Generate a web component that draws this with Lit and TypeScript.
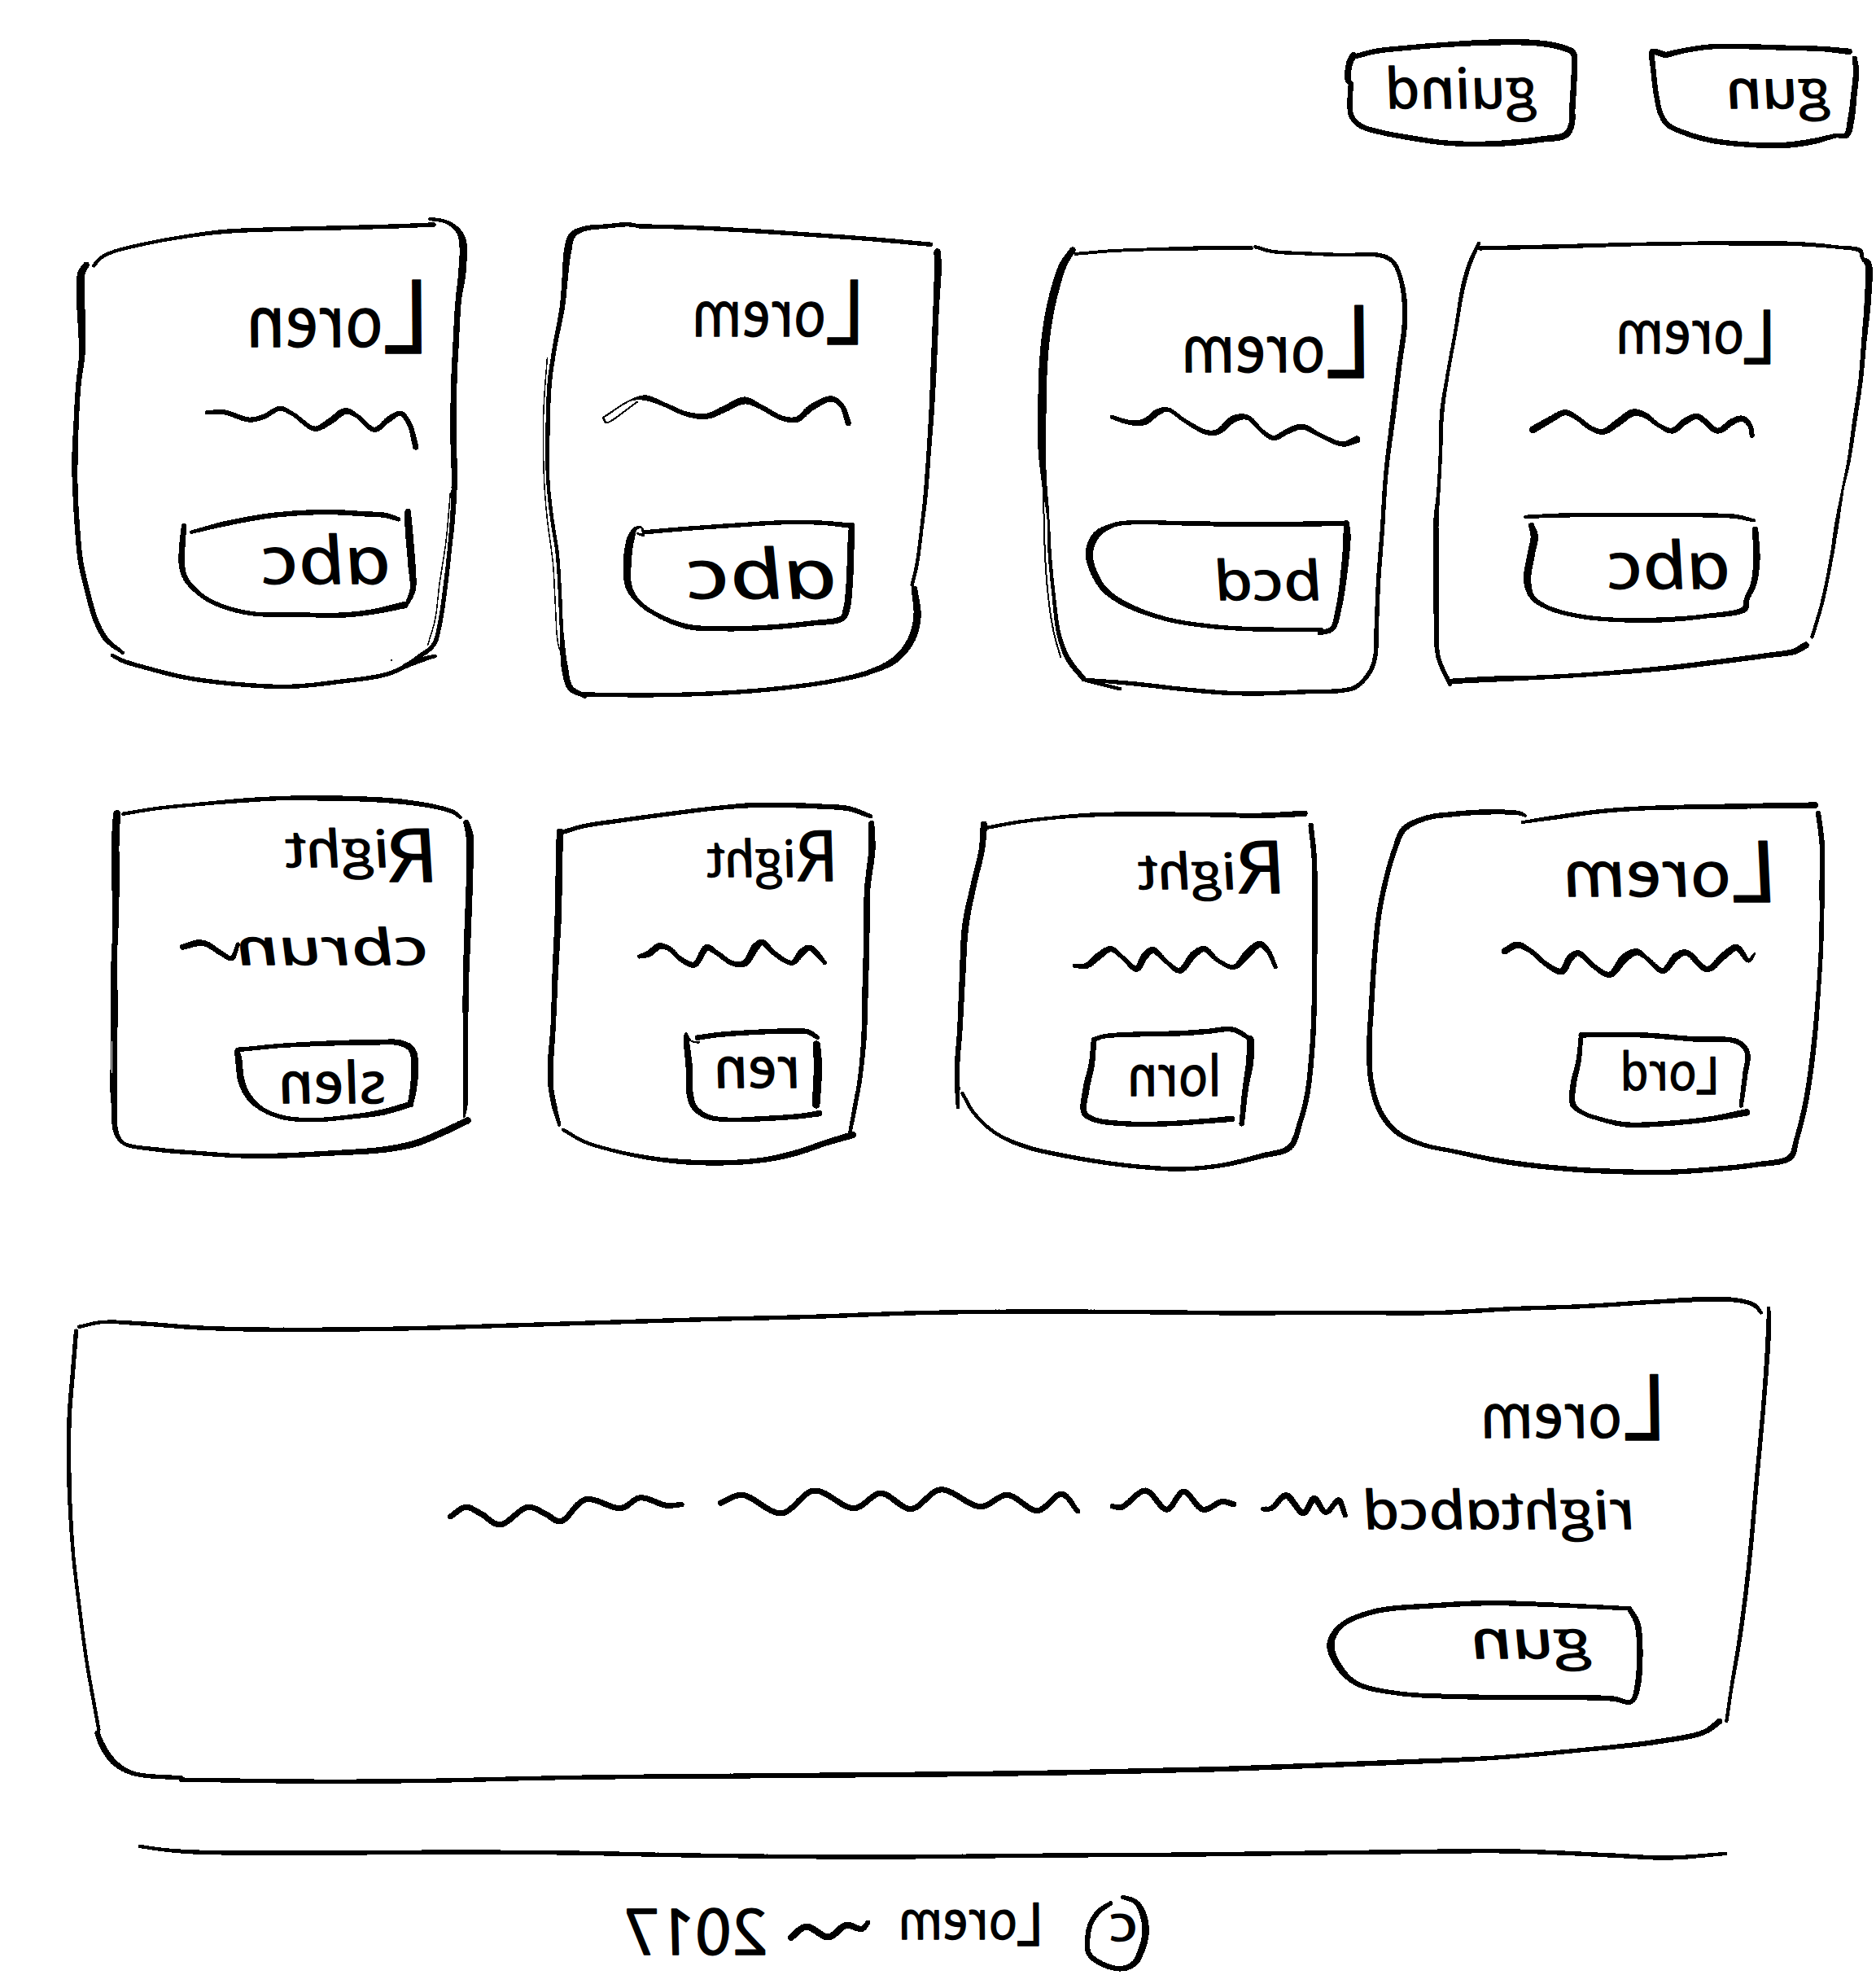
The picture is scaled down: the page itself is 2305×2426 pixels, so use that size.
import { LitElement, html, svg, css, nothing } from "lit";
import { customElement, property } from "lit/decorators.js";

/** A local drawing grid: page origin plus grid units per page pixel. */
interface Grid { ox: number; oy: number; sx: number; sy: number }
interface Rect { x: number; y: number; w: number; h: number }

/** Mirrored pen lettering. Vertical values are grid units. */
interface Label {
  text: string;
  left: number;
  right: number;
  base: number;
  top: number;
  /** top and baseline of a taller initial */
  initial?: [number, number];
  /** height of the measured glyphs in em */
  ratio?: number;
}
interface Part {
  kind: "title" | "line" | "button" | "mark";
  grid: Grid;
  box: [number, number, number, number];
  strokes?: string[];
  label?: Label;
}
interface Card { grid: Grid; box: [number, number, number, number]; outline: string[]; parts: Part[] }

const grid = (ox: number, oy: number, w: number, h: number): Grid => ({
  ox, oy, sx: Math.min(3, 1568 / w), sy: Math.min(3, 1568 / h),
});

const toRect = (g: Grid, b: [number, number, number, number]): Rect => ({
  x: g.ox + b[0] / g.sx,
  y: g.oy + b[1] / g.sy,
  w: (b[2] - b[0]) / g.sx,
  h: (b[3] - b[1]) / g.sy,
});

/**
 * Turns "x,y:w x,y x,y:w" into the filled area of a pen stroke whose
 * width runs smoothly between the given widths.
 */
function ink(g: Grid, source: string, extra: number): string {
  let w = 6;
  const p = source.trim().split(/\s+/).map((token) => {
    const [xy, width] = token.split(":");
    const [x, y] = xy.split(",").map(Number);
    if (width) w = Number(width);
    return [g.ox + x / g.sx, g.oy + y / g.sy, w > 3 ? w + extra : w];
  });
  const samples: number[][] = [];
  if (p.length === 1) samples.push(p[0]);
  for (let i = 0; i < p.length - 1; i++) {
    const a = p[Math.max(0, i - 1)], b = p[i], c = p[i + 1], d = p[Math.min(p.length - 1, i + 2)];
    const len = Math.hypot(c[0] - b[0], c[1] - b[1]);
    const n = Math.max(2, Math.ceil(len / 4));
    const dist = (u: number[], v: number[]) => Math.max(0.01, Math.sqrt(Math.hypot(u[0] - v[0], u[1] - v[1])));
    const t1 = dist(a, b), t2 = dist(b, c), t3 = dist(c, d);
    const tangent = (k: number, first: boolean) => {
      if (first) {
        if (a === b) return c[k] - b[k];
        return t2 * ((b[k] - a[k]) / t1 - (c[k] - a[k]) / (t1 + t2) + (c[k] - b[k]) / t2);
      }
      if (c === d) return c[k] - b[k];
      return t2 * ((c[k] - b[k]) / t2 - (d[k] - b[k]) / (t2 + t3) + (d[k] - c[k]) / t3);
    };
    const m1 = [tangent(0, true), tangent(1, true)], m2 = [tangent(0, false), tangent(1, false)];
    for (let s = i === 0 ? 0 : 1; s <= n; s++) {
      const t = s / n, tt = t * t, ttt = tt * t;
      const at = (k: number) =>
        (2 * ttt - 3 * tt + 1) * b[k] + (ttt - 2 * tt + t) * m1[k] + (3 * tt - 2 * ttt) * c[k] + (ttt - tt) * m2[k];
      samples.push([at(0), at(1), b[2] + (c[2] - b[2]) * t]);
    }
  }
  const f = (v: number) => v.toFixed(1);
  let d = "";
  samples.forEach((s, i) => {
    const r = s[2] / 2;
    d += `M${f(s[0] - r)} ${f(s[1])}a${r} ${r} 0 1 0 ${2 * r} 0a${r} ${r} 0 1 0 ${-2 * r} 0z`;
    const q = samples[i + 1];
    if (!q) return;
    const len = Math.hypot(q[0] - s[0], q[1] - s[1]) || 1;
    const nx = -(q[1] - s[1]) / len, ny = (q[0] - s[0]) / len, k = q[2] / 2;
    d += `M${f(s[0] + nx * r)} ${f(s[1] + ny * r)}L${f(q[0] + nx * k)} ${f(q[1] + ny * k)}L${f(q[0] - nx * k)} ${f(q[1] - ny * k)}L${f(s[0] - nx * r)} ${f(s[1] - ny * r)}z`;
  });
  return d;
}

const SLANT = 11;

function lettering(g: Grid, l: Label) {
  const ratio = l.ratio ?? 0.545;
  const size = (l.base - l.top) / g.sy / ratio;
  const start = g.ox + l.right / g.sx;
  const base = g.oy + l.base / g.sy;
  const width = (l.right - l.left) / g.sx;
  let body: unknown = l.text;
  if (l.initial) {
    const big = (l.initial[1] - l.initial[0]) / g.sy / 0.714;
    const drop = (l.initial[1] - l.base) / g.sy;
    body = svg`<tspan font-size=${big} dy=${drop}>${l.text[0]}</tspan><tspan dy=${-drop}>${l.text.slice(1)}</tspan>`;
  }
  return svg`<text class="hand" font-size=${size} textLength=${width} lengthAdjust="spacingAndGlyphs"
    transform="translate(${start} ${base}) scale(-1 1) skewX(${SLANT})">${body}</text>`;
}

function drawing(r: Rect, g: Grid, strokes: string[] = [], label?: Label, extra = 0.4) {
  return html`<svg width=${r.w} height=${r.h} viewBox="${r.x} ${r.y} ${r.w} ${r.h}">
    ${strokes.map((s) => svg`<path class="ink" d=${ink(g, s, extra)}></path>`)}
    ${label ? lettering(g, label) : nothing}
  </svg>`;
}

/* ---------- content ---------- */

const G1 = grid(1600, 20, 705, 180);
const G2 = grid(60, 250, 560, 620);
const G3 = grid(640, 250, 560, 620);
const G4 = grid(1250, 280, 500, 590);
const G5 = grid(1740, 280, 565, 590);
const G6 = grid(110, 960, 500, 480);
const G7 = grid(650, 960, 460, 490);
const G8 = grid(1150, 970, 500, 480);
const G9 = grid(1660, 970, 600, 480);
const G10 = grid(1500, 1580, 700, 620);
const G11 = grid(60, 1580, 1460, 640);
const G12 = grid(700, 2240, 760, 186);
const PAGE: Grid = { ox: 0, oy: 0, sx: 1, sy: 1 };

const title = (g: Grid, text: string, left: number, right: number, top: number, base: number, initial: [number, number]): Part => ({
  kind: "title", grid: g, box: [left, initial[0], right, initial[1]],
  label: { text, left, right, top, base, initial },
});
const wave = (g: Grid, box: [number, number, number, number], ...strokes: string[]): Part => ({ kind: "line", grid: g, box, strokes });
const button = (g: Grid, box: [number, number, number, number], label: Label, ...strokes: string[]): Part => ({
  kind: "button", grid: g, box, strokes, label,
});

const NAV: Part[] = [
  button(G1, [120, 88, 752, 480], { text: "guind", left: 218, right: 634, top: 228, base: 340 },
    "150,147:6 200,130 280,118 400,105 520,97:7 610,97 670,104 715,118 740,135:7 744,160 742,250 738,340 736,400 720,438:8 650,455:7 560,468 470,472:6 380,466 300,450 220,430 160,405 135,370 130,330 133,250",
    "140,145:8 130,170 125,235:7 133,250:5"),
  button(G1, [950, 102, 1520, 485], { text: "gun", left: 1150, right: 1436, top: 232, base: 340 },
    "992,143:7 1050,125:6 1120,112 1220,112 1320,116 1420,120 1495,130:7",
    "1510,155:6 1514,200:7 1508,290 1500,380:8 1488,438:7 1460,440:5 1400,460:7 1320,475:7 1220,473:6 1120,458 1050,432 1000,400 980,360 968,290 960,200 958,130:7 975,135 995,143"),
];

const TOP_ROW: Card[] = [
  {
    grid: G2, box: [82, 45, 1436, 1505],
    outline: [
      "130,190:7 113,215:9 110,290:10 115,400:9 115,470:7 103,560:6 95,680 90,800:7 92,900:6 100,1020:6 110,1110 135,1210 165,1300 200,1355 255,1395:4",
      "155,193:4 180,168 220,150 330,125 450,105 600,87:5 770,80 1000,75 1200,70 1325,65:5",
      "1312,47:4 1370,57 1410,85:6 1425,120:9 1422,220:9 1410,300:7 1402,420:7 1395,550:7 1392,700:7 1396,850:7 1392,950:6 1380,1070:5 1365,1190:5 1345,1310:5 1325,1370:5 1270,1410:5 1210,1445 1150,1465 1000,1485 830,1500 640,1492 470,1472 340,1443 255,1420 218,1403:4",
      "1382,900:1.5 1367,1050 1345,1180 1330,1290 1305,1370",
      "1230,1435:6 1280,1418 1330,1405:4", "1180,1418:2.5",
    ],
    parts: [
      title(G2, "Loren", 666, 1298, 325, 445, [237, 465]),
      wave(G2, [540, 630, 1272, 760], "543,650:4 600,648:5 690,672:5 740,662:5 795,637:5 840,655:4 915,700:5 970,675:7 1020,645:7 1060,660:4 1120,703:5 1170,670:6 1210,652:5 1240,685:5 1262,757:6"),
      button(G2, [445, 952, 1262, 1286], { text: "abc", left: 720, right: 1165, top: 1070, base: 1182 },
        "490,1022:4 600,997:6 750,972 870,962 980,960 1080,965 1160,970 1203,982:5",
        "465,1003:6 460,1050:7 457,1120:7 470,1165:6 520,1215:5 590,1250 700,1275 850,1278 1000,1280:6 1110,1270 1225,1248:8",
        "1235,958:7 1238,1010:9 1248,1120:9 1252,1200:7 1235,1240:5"),
    ],
  },
  {
    grid: G3, box: [75, 58, 1446, 1536],
    outline: [
      "415,72:4 370,65:5 300,70:5 210,80:6 175,100:8 160,150:9 152,220:7 142,320:6 115,450:5 98,560:5 92,700 92,850:4 105,970:4 125,1090 133,1200:4 140,1330:4 150,1440:8 170,1505:7 220,1530:5",
      "90,480:1.5 80,600 76,700 80,870 90,980 110,1120 118,1250 128,1370 145,1410",
      "400,70:5 600,75 800,85 1000,97 1200,110 1410,127:5",
      "1432,150:8 1434,200:9 1428,320:7 1420,500:7 1412,650:6 1402,780:5 1392,900 1378,1010:4 1362,1120 1345,1185:4",
      "1353,1197:7 1363,1280:9 1345,1350:9 1290,1415:8 1200,1455:6 1080,1482:5 900,1505 700,1520 450,1527 215,1525:5",
    ],
    parts: [
      title(G3, "Lorem", 576, 1174, 305, 412, [237, 437]),
      wave(G3, [275, 598, 1134, 688], "285,665:2 380,612 430,605:6 500,628:4 570,655:5 640,662:6 700,640:7 770,613:8 820,630:5 900,668:5 950,672:6 1000,635:7 1070,608:6 1105,630:5 1127,683:6", "285,668:3 293,682:2 400,618"),
      button(G3, [355, 985, 1148, 1330], { text: "abc", left: 558, right: 1076, top: 1112, base: 1228 },
        "430,1022:5 560,1012 750,1000 900,992 1030,993 1138,1002:6",
        "1138,1002:7 1135,1060:8 1130,1180:8 1120,1260:8 1105,1290:7 1000,1305:6 850,1318 700,1322 570,1315 460,1275:5 400,1235 370,1190:8 366,1110:10 378,1040:9 395,1010:4 415,1008:2.5 420,1030:4 400,1026:2"),
    ],
  },
  {
    grid: G4, box: [76, 56, 1438, 1525],
    outline: [
      "205,72:7 170,120:9 140,200:10 115,300:10 98,430:10 92,600:10 92,730:9 100,830:6 115,950:3 120,1060:4 135,1200:4 155,1330:5 190,1410:6 245,1472:6",
      "98,850:2 100,1000 112,1180 135,1320 160,1400", "245,1475:4 310,1490 380,1505",
      "215,85:3.5 350,75 500,70 700,66:5 862,66:5",
      "878,62:4 940,77 1050,83 1200,88 1340,90:5 1385,110 1412,160 1428,240:6 1428,320:6 1410,440:6 1385,620:6 1360,800:5 1345,1000 1332,1150 1325,1300 1320,1400:5 1300,1450:5 1250,1498:5 1200,1510 1050,1515 900,1520 770,1518:5 600,1505 430,1488 255,1475:4",
    ],
    parts: [
      title(G4, "Lorem", 592, 1296, 355, 470, [252, 488]),
      wave(G4, [346, 584, 1262, 714], "350,617:4 420,635:5 470,632:7 520,600:7 555,592:4 620,630:4 700,667:5 740,665:6 800,622:8 850,618:5 900,660:4 945,685:5 1000,662:6 1050,648:6 1120,677:4 1200,705:5 1252,690:8"),
      button(G4, [255, 955, 1230, 1330], { text: "bcd", left: 715, right: 1114, top: 1118, base: 1215 },
        "1210,965:6 1000,968:6 800,968 600,965:5 430,962:5 350,972:5 290,1005:9 265,1060:9 275,1110:8 320,1180:7 400,1230:6 550,1278:5 700,1300 850,1310 1120,1312:5",
        "1213,965:7 1215,1010:9 1205,1120:8 1185,1240:7 1160,1310:6 1115,1322:6"),
    ],
  },
  {
    grid: G5, box: [58, 45, 1550, 1495],
    outline: [
      "213,50:4 185,110:5 160,190:5 135,330:4 105,490:4 88,600:5 82,750:4 75,870 68,950:6 68,1100:6 68,1250 75,1400:5 115,1488:5",
      "218,66:5 500,60 800,52:4 1100,50:5 1300,52:5 1430,62:4 1515,75:5 1522,100:4 1540,115:8 1540,230:8 1527,370:6 1515,500:5 1495,630:5 1475,760:4 1455,850:3 1435,960:5 1415,1080:4 1385,1220 1350,1335:4",
      "1328,1362:8 1290,1382:7 1200,1395:6 1000,1420 850,1437 600,1457:5 400,1468:5 250,1473:7 115,1480:6",
    ],
    parts: [
      title(G5, "Lorem", 670, 1225, 302, 408, [268, 444]),
      wave(G5, [390, 595, 1154, 680], "400,658:8 460,625:7 510,602:6 550,620:5 600,655:5 640,665:6 690,635:8 740,603:8 780,610:6 830,645:4 875,662:6 920,630:7 960,615:6 1030,662:6 1080,632:7 1115,622:6 1140,645:5 1147,677:5"),
      button(G5, [368, 930, 1168, 1290], { text: "abc", left: 640, right: 1060, top: 1062, base: 1178 },
        "372,943:4 500,938:5 800,936 1000,938 1090,942 1150,955:4",
        "392,972:7 402,1005:9 390,1070:9 378,1150:9 395,1205:6 450,1240:5 560,1268 700,1280 820,1280:6 980,1268:5 1120,1243:7 1125,1215:6 1150,1160:7 1160,1080:8 1155,985:7"),
    ],
  },
];

const SECOND_ROW: Card[] = [
  {
    grid: G6, box: [76, 52, 1416, 1388],
    outline: [
      "125,120:4 250,100 400,85 550,72:5 700,63 850,62:6 1000,65:6 1150,75:6 1280,95:5 1345,115 1368,133:4",
      "102,120:9 97,200:9 97,350 97,500:8 95,600:6 95,900:6 93,1100:6 93,1200:7 98,1290:6 125,1333:4 250,1357:5 400,1370 550,1380 700,1380:6 900,1370:6 1080,1358:7 1200,1335:8 1300,1295:8 1395,1250:8",
      "83,600:1.5 82,900 80,1150 84,1200",
      "1390,153:7 1402,200:9 1402,350:8 1395,550:8 1388,750:7 1387,1000:6 1387,1190:5 1382,1235:3",
    ],
    parts: [
      title(G6, "Right", 710, 1284, 212, 315, [175, 370]),
      { kind: "line", grid: G6, box: [340, 495, 1236, 685], label: { text: "cbrun", left: 530, right: 1240, top: 575, base: 675 }, strokes: ["345,610:6 400,595:7 430,598:6 485,632:5 525,652:5 548,600:4"] },
      button(G6, [532, 952, 1212, 1255], { text: "slen", left: 686, right: 1082, top: 1070, base: 1185 },
        "565,988:5 700,975 900,965:6 1050,962 1150,965:7 1190,990:8 1200,1050:9 1195,1130:8 1185,1185:7",
        "1185,1190:7 1080,1220:7 950,1238:5 830,1248:5 720,1240:5 640,1210 590,1165:7 562,1110:8 550,1020:8 545,990:5 565,988"),
    ],
  },
  {
    grid: G7, box: [70, 78, 1278, 1415],
    outline: [
      "115,190:5 200,165 350,142 550,115 700,97 830,87:6 950,87 1080,92:6 1180,100 1260,128:5",
      "115,185:8 112,300:8 108,500:8 98,700:7 90,900:6 80,1050:7 82,1130:6 95,1200:6 113,1265:4",
      "127,1283:4 200,1325 300,1357 450,1388:5 580,1402:6 720,1405:6 860,1395:6 980,1370:7 1100,1330:7 1195,1302:8",
      "1263,155:7 1265,250:8 1248,400:7 1245,600:7 1240,780:7 1235,950:6 1220,1100:5 1200,1210:5 1183,1300:4",
    ],
    parts: [
      title(G7, "Right", 644, 1130, 250, 352, [180, 365]),
      wave(G7, [405, 585, 1096, 685], "407,645:4 440,635:7 480,607:7 515,615:5 560,655:5 610,675:6 655,612:7 690,630:5 750,670:5 795,670:7 835,610:9 860,592:6 900,630:5 970,668:5 1005,630:8 1035,612:6 1062,635:6 1090,668:4"),
      button(G7, [570, 908, 1080, 1252], { text: "ren", left: 670, right: 990, top: 1015, base: 1128 },
        "620,943:6 700,932 850,922 980,918:6 1030,922 1063,942:5", "1060,968:9 1065,1050:10 1062,1120 1058,1190:9",
        "576,930:3 580,960:7 590,1050:8 593,1150:8 610,1200:7 660,1235:6 740,1245:5 850,1242:6 1000,1232 1070,1222:7", "578,930:4 597,955:2 625,960:3"),
    ],
  },
  {
    grid: G8, box: [70, 78, 1412, 1406],
    outline: [
      "190,140:4 300,120 450,102 600,92:5 800,90:5 1000,92 1200,95:6 1360,88:7",
      "178,128:8 170,220:7 140,350:7 110,500:8 98,700:7 88,900:6 80,1000:6 80,1100:6 82,1170:4",
      "98,1118:4 140,1190 220,1265 330,1315:5 480,1350 650,1378 780,1392:5 900,1398:5 1050,1385:5 1200,1350:6 1305,1318:7 1345,1220:6 1370,1120 1388,950:6 1395,800:6 1397,600:6 1398,400 1395,250:6 1383,132:6",
    ],
    parts: [
      title(G8, "Right", 734, 1280, 266, 366, [188, 380]),
      wave(G8, [508, 562, 1260, 680], "512,650:4 555,650:6 600,615:8 645,588:6 690,620:4 740,662:6 770,615:8 800,592:7 850,635:4 900,668:6 950,610:8 990,588:6 1040,630:4 1100,655:5 1150,605:9 1195,570:7 1225,595:5 1253,655:4"),
      button(G8, [535, 878, 1172, 1240], { text: "lorn", left: 695, right: 1042, top: 1015, base: 1128 },
        "583,920:5 620,908:5 750,900:6 900,897 1000,890 1095,883:6 1160,918:5", "1160,918:8 1158,1000:9 1142,1100:7 1128,1230:6",
        "583,920:6 575,1010:7 555,1100:8 548,1190:7 585,1215:6 700,1230:6 850,1230 1000,1220 1092,1212:7"),
    ],
  },
  {
    grid: G9, box: [52, 48, 1522, 1418],
    outline: [
      "550,120:3.5 650,103:5 800,80 950,68 1200,62:6 1490,57:7",
      "560,97:3 545,88:5 450,82:6 330,90 240,105:6 170,145:7 140,220:6 110,340 88,470 75,620 65,800 58,950:6 65,1080:6 95,1190 150,1265 230,1308:5 330,1333:5 500,1372:6 700,1398 850,1407 1000,1410:6 1150,1400 1300,1382 1410,1355:7 1430,1290:6 1460,1150:6 1485,950:6 1500,750:5 1510,550:5 1512,350:6 1512,200:6 1500,88:6",
    ],
    parts: [
      title(G9, "Lorem", 670, 1362, 268, 395, [190, 415]),
      wave(G9, [490, 564, 1302, 692], "495,595:7 535,572:7 575,592:5 630,645:5 678,670:7 705,620:8 730,602:6 780,650:5 832,682:6 880,620:10 918,598:7 950,620:4 1003,668:6 1045,615:8 1078,600:6 1145,662:6 1200,610:8 1240,582:7 1278,630:4 1297,605:3"),
      button(G9, [705, 898, 1280, 1245], { text: "Lord", left: 854, right: 1178, top: 1003, base: 1108, initial: [985, 1122] },
        "738,905:6 930,905 1100,920 1240,930:6 1272,970:6 1265,1050:6 1252,1165:5",
        "738,905:5 730,1000:6 713,1090:7 712,1160:7 740,1190:5 800,1215 880,1235:6 1000,1232:6 1150,1215:6 1270,1190:8"),
    ],
  },
];

const PANEL_RECT: Rect = { x: 80, y: 1592, w: 2098, h: 596 };
const PANEL_LEFT = [
  "40,122:4 70,108:4 120,112:5 200,125 280,130 450,128 620,117 860,100 1000,92 1150,80 1300,76 1568,80",
  "1568,1452:6 1300,1465:6 1000,1472:6 700,1478:5 500,1488 350,1490 175,1485:5",
  "175,1480:5 110,1465 85,1430:7 70,1380:7 64,1345:6",
  "66,1335:4 50,1130:4 40,960:4 32,800:4 27,600:5 27,400:5 32,250:5 36,135:5",
];
const PANEL_RIGHT = [
  "0,84:5 300,82 600,82 800,70 1000,62 1200,48 1350,40:6 1430,45:5 1470,60:5 1487,82:4",
  "1508,68:4 1507,150:6 1495,350:5 1475,600:5 1455,850:5 1430,1080:5 1405,1250:4 1392,1350:4",
  "1372,1352:7 1330,1385:6 1200,1415 1000,1440:5 750,1465 500,1478:6 0,1500",
];
const PANEL_TITLE = title(G10, "Lorem", 705, 1216, 366, 470, [272, 476]);
const PANEL_LINE: Part[] = [
  wave(G11, [525, 630, 838, 725], "530,693:6 550,665:6 570,685 595,718 632,665 655,685 675,708 708,642 755,668 780,637 815,660 835,657:5"),
  wave(G11, [882, 605, 1362, 690], "887,652:6 915,628 967,683 1010,615 1063,668 1098,623 1138,670 1177,612 1230,663 1265,628 1305,675 1337,625 1358,677:5"),
  wave(G11, [1398, 610, 1566, 678], "1403,662:5 1415,665:6 1447,615 1475,672 1497,618 1523,672 1548,648 1563,656"),
  wave(G10, [115, 645, 346, 715], "118,692:5 140,690 180,650:7 228,705:6 258,660:7 290,703:5 325,665:6 343,712:5"),
  { kind: "line", grid: G10, box: [385, 605, 1128, 835], label: { text: "rightabcd", left: 382, right: 1132, top: 665, base: 755 } },
];
const PANEL_BUTTON = button(G10, [292, 975, 1158, 1295], { text: "gun", left: 680, right: 1012, top: 1065, base: 1155 },
  "1125,1000:5 1000,993:5 750,983:6 600,990 420,1010 330,1055:6 303,1110:9 320,1170:8 370,1230:6 480,1262:5 700,1275:6 1080,1280:6 1130,1290:5 1148,1240:7 1148,1050:7 1125,1000:6");

const RULE = "172,2268:4 200,2272:4 240,2275:5 400,2276 560,2275 700,2276 850,2279 1065,2281 1300,2279 1460,2278 1700,2275 1860,2274 1980,2279 2050,2282 2120,2277:4";
const FOOTER: Part[] = [
  { kind: "mark", grid: G12, box: [133, 305, 492, 505], label: { text: "2017", left: 126, right: 496, top: 312, base: 482, ratio: 0.72 } },
  wave(G12, [552, 360, 760, 425], "560,420:7 598,380:7 655,418:7 700,375:7 740,388:6 755,365:5"),
  { kind: "mark", grid: G12, box: [830, 292, 1192, 452], label: { text: "Lorem", left: 826, right: 1198, top: 320, base: 428, initial: [292, 450] } },
  {
    kind: "mark", grid: G12, box: [1308, 268, 1468, 540],
    strokes: ["1371,295:5 1345,320:6 1322,365 1313,420 1316,480 1345,515 1395,536:6 1430,518:7 1450,465:8 1460,400 1453,335:8 1435,290:6 1403,272:5"],
    label: { text: "c", left: 1362, right: 1434, top: 335, base: 434 },
  },
];

/* ---------- elements ---------- */

const inkStyles = css`
  svg { display: block; overflow: visible; flex: none; }
  .ink { fill: #000; shape-rendering: crispEdges; }
  .hand { font-family: "Open Sans", "Noto Sans", sans-serif; font-style: italic; fill: #000; stroke: #000; stroke-width: 1.3px; stroke-linejoin: round; }
  .part { margin: 0; padding: 0; border: 0; background: none; display: block; flex: none; font: inherit; }
`;

function renderPart(part: Part, left: number, top: number) {
  const r = toRect(part.grid, part.box);
  const place = `margin-left:${left}px;margin-top:${top}px;width:${r.w}px;height:${r.h}px`;
  const content = drawing(r, part.grid, part.strokes, part.label, part.kind === "line" ? 1.1 : 0.4);
  if (part.kind === "button") return html`<button class="part" style=${place}>${content}</button>`;
  if (part.kind === "title") return html`<h2 class="part" style=${place}>${content}</h2>`;
  return html`<div class="part" style=${place}>${content}</div>`;
}

/** Stacks parts downwards, spaced by the distances in the data. */
function stack(parts: Part[], frame: Rect) {
  let bottom = frame.y;
  return parts.map((part) => {
    const r = toRect(part.grid, part.box);
    const out = renderPart(part, r.x - frame.x, r.y - bottom);
    bottom = r.y + r.h;
    return out;
  });
}

/** Lines parts up from left to right, spaced by the distances in the data. */
function line(parts: Part[], left: number, top: number) {
  let edge = left;
  return parts.map((part) => {
    const r = toRect(part.grid, part.box);
    const out = renderPart(part, r.x - edge, r.y - top);
    edge = r.x + r.w;
    return out;
  });
}

@customElement("sketch-card")
class SketchCard extends LitElement {
  @property({ attribute: false }) card!: Card;
  static styles = [inkStyles, css`
    :host { display: block; flex: none; }
    .card { position: relative; display: flex; flex-direction: column; align-items: flex-start; }
    .outline { position: absolute; inset: 0; pointer-events: none; }
  `];
  render() {
    const { grid: g, box, outline, parts } = this.card;
    const r = toRect(g, box);
    return html`<article class="card" style="width:${r.w}px;height:${r.h}px">
      <div class="outline">${drawing(r, g, outline)}</div>
      ${stack(parts, r)}
    </article>`;
  }
}

@customElement("app-root")
class AppRoot extends LitElement {
  static styles = [inkStyles, css`
    :host { display: block; width: 2305px; height: 2426px; background: #fff; overflow: hidden; }
    .page { display: grid; grid-template-rows: 250px 710px 620px 620px 226px; width: 2305px; height: 2426px; }
    .nav, .row, .words { display: flex; align-items: flex-start; }
    .panel { position: relative; margin: 12px 0 0 80px; width: 2098px; height: 596px; display: flex; flex-direction: column; align-items: flex-start; }
    .outline { position: absolute; inset: 0; pointer-events: none; }
    .words { height: 0; }
    .foot { display: flex; flex-direction: column; }
    .rule { height: 40px; }
  `];

  private cards(cards: Card[], top: number) {
    let edge = 0;
    return cards.map((card) => {
      const r = toRect(card.grid, card.box);
      const place = `margin-left:${r.x - edge}px;margin-top:${r.y - top}px`;
      edge = r.x + r.w;
      return html`<sketch-card style=${place} .card=${card}></sketch-card>`;
    });
  }

  render() {
    const p = PANEL_RECT;
    const t = toRect(G10, PANEL_TITLE.box);
    const b = toRect(G10, PANEL_BUTTON.box);
    const wordsTop = t.y + t.h;
    return html`<main class="page">
      <nav class="nav">${line(NAV, 0, 0)}</nav>
      <section class="row">${this.cards(TOP_ROW, 250)}</section>
      <section class="row">${this.cards(SECOND_ROW, 960)}</section>
      <section class="panel">
        <div class="outline">${drawing(p, G11, PANEL_LEFT)}</div>
        <div class="outline">${drawing(p, G10, PANEL_RIGHT)}</div>
        ${renderPart(PANEL_TITLE, t.x - p.x, t.y - p.y)}
        <div class="words">${line(PANEL_LINE, p.x, wordsTop)}</div>
        ${renderPart(PANEL_BUTTON, b.x - p.x, b.y - wordsTop)}
      </section>
      <footer class="foot">
        <div class="rule">${drawing({ x: 0, y: 2200, w: 2305, h: 40 }, PAGE, [RULE])}</div>
        <div class="nav">${line(FOOTER, 0, 2240)}</div>
      </footer>
    </main>`;
  }
}
